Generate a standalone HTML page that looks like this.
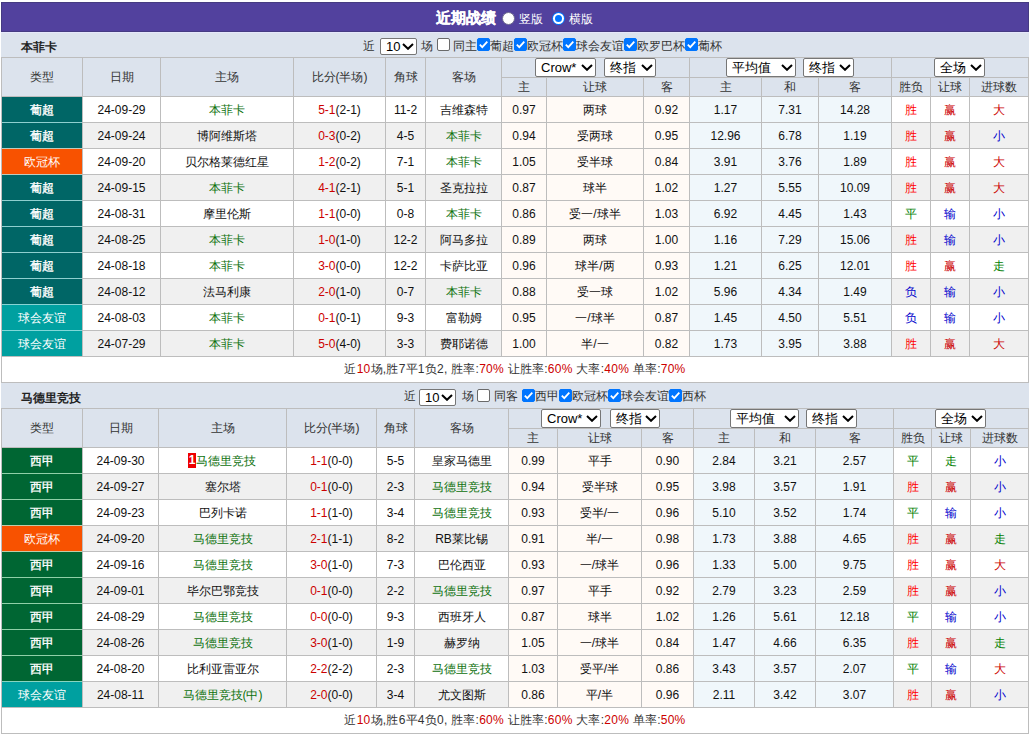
<!DOCTYPE html>
<html><head><meta charset="utf-8"><style>
html,body{margin:0;padding:0;background:#fff;}
body{width:1032px;height:737px;overflow:hidden;position:relative;font-family:"Liberation Sans",sans-serif;font-size:12px;}
div,svg{position:absolute;box-sizing:border-box;}
div{white-space:nowrap;}
.sel{background:#fff;border:1px solid #767676;border-radius:2px;color:#000;}
.sel span{position:absolute;white-space:nowrap;}
.cb{width:13px;height:13px;border:1px solid #6a6a6a;border-radius:2px;background:#fff;}
.cb.on{background:#0075ff;border-color:#0075ff;}
.cb svg{left:-1px;top:-1px;}
.badge{display:inline-block;background:#e00;color:#fff;font-weight:bold;width:8px;height:15px;line-height:15px;text-align:center;vertical-align:middle;font-size:12px;position:relative;top:-1px;margin-left:-1px;}
</style></head><body>
<div style="left:1px;top:2px;width:1028px;height:30px;background:#52419e;box-sizing:border-box;border:1px solid #463b82"></div><div style="left:436px;top:3px;width:70px;height:30px;color:#fff;font-weight:bold;font-size:15px;line-height:30px;-webkit-text-stroke:0.3px #fff">近期战绩</div><div style="left:502px;top:12px;width:13px;height:13px;background:#fff;border-radius:50%;border:1px solid #6e6a8e"></div><div style="left:519px;top:4px;width:30px;height:30px;color:#fff;font-size:12px;line-height:30px">竖版</div><div style="left:552px;top:12px;width:13px;height:13px;background:#0075ff;border-radius:50%"></div><div style="left:555px;top:15px;width:7px;height:7px;background:#0075ff;border-radius:50%;box-shadow:0 0 0 2px #fff"></div><div style="left:569px;top:4px;width:30px;height:30px;color:#fff;font-size:12px;line-height:30px">横版</div><div style="left:1px;top:32px;width:1028px;height:1px;background:#e5e7fb"></div><div style="left:1px;top:33px;width:1028px;height:24px;background:#dce3ed"></div><div style="left:21px;top:35px;width:80px;height:24px;font-weight:bold;color:#222;line-height:24px">本菲卡</div><div style="left:363px;top:34px;width:60px;height:24px;line-height:24px;color:#333;white-space:nowrap">近</div><div class="sel" style="left:380px;top:38px;width:37px;height:17px;"><span style="left:5px;top:0;line-height:15px;font-size:13px">10</span><svg style="left:21px;top:4px" width="12" height="7" viewBox="0 0 12 7"><path d="M1 1 L6 5.8 L11 1" fill="none" stroke="#000" stroke-width="2"/></svg></div><div style="left:421px;top:34px;width:60px;height:24px;line-height:24px;color:#333;white-space:nowrap">场</div><div class="cb" style="left:437px;top:38px"></div><div style="left:453px;top:34px;width:60px;height:24px;line-height:24px;color:#333;white-space:nowrap">同主</div><div class="cb on" style="left:477px;top:38px"><svg width="13" height="13" viewBox="0 0 13 13"><path d="M2.8 6.6 L5.3 9.1 L10.3 3.6" fill="none" stroke="#fff" stroke-width="1.8"/></svg></div><div style="left:490px;top:34px;width:60px;height:24px;line-height:24px;color:#333;white-space:nowrap">葡超</div><div class="cb on" style="left:514px;top:38px"><svg width="13" height="13" viewBox="0 0 13 13"><path d="M2.8 6.6 L5.3 9.1 L10.3 3.6" fill="none" stroke="#fff" stroke-width="1.8"/></svg></div><div style="left:527px;top:34px;width:60px;height:24px;line-height:24px;color:#333;white-space:nowrap">欧冠杯</div><div class="cb on" style="left:563px;top:38px"><svg width="13" height="13" viewBox="0 0 13 13"><path d="M2.8 6.6 L5.3 9.1 L10.3 3.6" fill="none" stroke="#fff" stroke-width="1.8"/></svg></div><div style="left:576px;top:34px;width:60px;height:24px;line-height:24px;color:#333;white-space:nowrap">球会友谊</div><div class="cb on" style="left:624px;top:38px"><svg width="13" height="13" viewBox="0 0 13 13"><path d="M2.8 6.6 L5.3 9.1 L10.3 3.6" fill="none" stroke="#fff" stroke-width="1.8"/></svg></div><div style="left:637px;top:34px;width:60px;height:24px;line-height:24px;color:#333;white-space:nowrap">欧罗巴杯</div><div class="cb on" style="left:685px;top:38px"><svg width="13" height="13" viewBox="0 0 13 13"><path d="M2.8 6.6 L5.3 9.1 L10.3 3.6" fill="none" stroke="#fff" stroke-width="1.8"/></svg></div><div style="left:698px;top:34px;width:60px;height:24px;line-height:24px;color:#333;white-space:nowrap">葡杯</div><div style="left:1px;top:57px;width:1028px;height:326px;background:#bdbdbd"></div><div style="left:2px;top:58px;width:80px;height:38px;background:#dce3ed;line-height:38px;text-align:center;color:#333">类型</div><div style="left:83px;top:58px;width:77px;height:38px;background:#dce3ed;line-height:38px;text-align:center;color:#333">日期</div><div style="left:161px;top:58px;width:132px;height:38px;background:#dce3ed;line-height:38px;text-align:center;color:#333">主场</div><div style="left:294px;top:58px;width:91px;height:38px;background:#dce3ed;line-height:38px;text-align:center;color:#333">比分(半场)</div><div style="left:386px;top:58px;width:39px;height:38px;background:#dce3ed;line-height:38px;text-align:center;color:#333">角球</div><div style="left:426px;top:58px;width:75px;height:38px;background:#dce3ed;line-height:38px;text-align:center;color:#333">客场</div><div style="left:502px;top:58px;width:187px;height:19px;background:#dce3ed"></div><div style="left:690px;top:58px;width:201px;height:19px;background:#dce3ed"></div><div style="left:892px;top:58px;width:136px;height:19px;background:#dce3ed"></div><div style="left:502px;top:78px;width:44px;height:18px;background:#dce3ed;line-height:18px;text-align:center;color:#333">主</div><div style="left:547px;top:78px;width:96px;height:18px;background:#dce3ed;line-height:18px;text-align:center;color:#333">让球</div><div style="left:644px;top:78px;width:45px;height:18px;background:#dce3ed;line-height:18px;text-align:center;color:#333">客</div><div style="left:690px;top:78px;width:71px;height:18px;background:#dce3ed;line-height:18px;text-align:center;color:#333">主</div><div style="left:762px;top:78px;width:56px;height:18px;background:#dce3ed;line-height:18px;text-align:center;color:#333">和</div><div style="left:819px;top:78px;width:72px;height:18px;background:#dce3ed;line-height:18px;text-align:center;color:#333">客</div><div style="left:892px;top:78px;width:38px;height:18px;background:#dce3ed;line-height:18px;text-align:center;color:#333">胜负</div><div style="left:931px;top:78px;width:38px;height:18px;background:#dce3ed;line-height:18px;text-align:center;color:#333">让球</div><div style="left:970px;top:78px;width:58px;height:18px;background:#dce3ed;line-height:18px;text-align:center;color:#333">进球数</div><div style="left:2px;top:97px;width:80px;height:25px;background:#006666;color:#fff;-webkit-text-stroke:0.35px #fff;line-height:25px;padding-top:1px;text-align:center">葡超</div><div style="left:83px;top:97px;width:77px;height:25px;background:#fff;color:#111;line-height:25px;padding-top:1px;text-align:center">24-09-29</div><div style="left:161px;top:97px;width:132px;height:25px;background:#fff;color:#111;line-height:25px;padding-top:1px;text-align:center"><span style="color:#0b700b">本菲卡</span></div><div style="left:294px;top:97px;width:91px;height:25px;background:#fff;color:#111;line-height:25px;padding-top:1px;text-align:center"><span style="color:#cc0000">5-1</span>(2-1)</div><div style="left:386px;top:97px;width:39px;height:25px;background:#fff;color:#111;line-height:25px;padding-top:1px;text-align:center">11-2</div><div style="left:426px;top:97px;width:75px;height:25px;background:#fff;color:#111;line-height:25px;padding-top:1px;text-align:center">吉维森特</div><div style="left:502px;top:97px;width:44px;height:25px;background:#fffaf6;color:#111;line-height:25px;padding-top:1px;text-align:center">0.97</div><div style="left:547px;top:97px;width:96px;height:25px;background:#fffaf6;color:#111;line-height:25px;padding-top:1px;text-align:center">两球</div><div style="left:644px;top:97px;width:45px;height:25px;background:#fffaf6;color:#111;line-height:25px;padding-top:1px;text-align:center">0.92</div><div style="left:690px;top:97px;width:71px;height:25px;background:#f0f7fb;color:#111;line-height:25px;padding-top:1px;text-align:center">1.17</div><div style="left:762px;top:97px;width:56px;height:25px;background:#f0f7fb;color:#111;line-height:25px;padding-top:1px;text-align:center">7.31</div><div style="left:819px;top:97px;width:72px;height:25px;background:#f0f7fb;color:#111;line-height:25px;padding-top:1px;text-align:center">14.28</div><div style="left:892px;top:97px;width:38px;height:25px;background:#fff;color:#ff0000;line-height:25px;padding-top:1px;text-align:center">胜</div><div style="left:931px;top:97px;width:38px;height:25px;background:#fff;color:#cc0000;line-height:25px;padding-top:1px;text-align:center">赢</div><div style="left:970px;top:97px;width:58px;height:25px;background:#fff;color:#cc0000;line-height:25px;padding-top:1px;text-align:center">大</div><div style="left:2px;top:123px;width:80px;height:25px;background:#006666;color:#fff;-webkit-text-stroke:0.35px #fff;line-height:25px;padding-top:1px;text-align:center">葡超</div><div style="left:83px;top:123px;width:77px;height:25px;background:#f0f0f0;color:#111;line-height:25px;padding-top:1px;text-align:center">24-09-24</div><div style="left:161px;top:123px;width:132px;height:25px;background:#f0f0f0;color:#111;line-height:25px;padding-top:1px;text-align:center">博阿维斯塔</div><div style="left:294px;top:123px;width:91px;height:25px;background:#f0f0f0;color:#111;line-height:25px;padding-top:1px;text-align:center"><span style="color:#cc0000">0-3</span>(0-2)</div><div style="left:386px;top:123px;width:39px;height:25px;background:#f0f0f0;color:#111;line-height:25px;padding-top:1px;text-align:center">4-5</div><div style="left:426px;top:123px;width:75px;height:25px;background:#f0f0f0;color:#111;line-height:25px;padding-top:1px;text-align:center"><span style="color:#0b700b">本菲卡</span></div><div style="left:502px;top:123px;width:44px;height:25px;background:#fffaf6;color:#111;line-height:25px;padding-top:1px;text-align:center">0.94</div><div style="left:547px;top:123px;width:96px;height:25px;background:#fffaf6;color:#111;line-height:25px;padding-top:1px;text-align:center">受两球</div><div style="left:644px;top:123px;width:45px;height:25px;background:#fffaf6;color:#111;line-height:25px;padding-top:1px;text-align:center">0.95</div><div style="left:690px;top:123px;width:71px;height:25px;background:#f0f7fb;color:#111;line-height:25px;padding-top:1px;text-align:center">12.96</div><div style="left:762px;top:123px;width:56px;height:25px;background:#f0f7fb;color:#111;line-height:25px;padding-top:1px;text-align:center">6.78</div><div style="left:819px;top:123px;width:72px;height:25px;background:#f0f7fb;color:#111;line-height:25px;padding-top:1px;text-align:center">1.19</div><div style="left:892px;top:123px;width:38px;height:25px;background:#f0f0f0;color:#ff0000;line-height:25px;padding-top:1px;text-align:center">胜</div><div style="left:931px;top:123px;width:38px;height:25px;background:#f0f0f0;color:#cc0000;line-height:25px;padding-top:1px;text-align:center">赢</div><div style="left:970px;top:123px;width:58px;height:25px;background:#f0f0f0;color:#0000cc;line-height:25px;padding-top:1px;text-align:center">小</div><div style="left:2px;top:149px;width:80px;height:25px;background:#f85200;color:#fff;line-height:25px;padding-top:1px;text-align:center">欧冠杯</div><div style="left:83px;top:149px;width:77px;height:25px;background:#fff;color:#111;line-height:25px;padding-top:1px;text-align:center">24-09-20</div><div style="left:161px;top:149px;width:132px;height:25px;background:#fff;color:#111;line-height:25px;padding-top:1px;text-align:center">贝尔格莱德红星</div><div style="left:294px;top:149px;width:91px;height:25px;background:#fff;color:#111;line-height:25px;padding-top:1px;text-align:center"><span style="color:#cc0000">1-2</span>(0-2)</div><div style="left:386px;top:149px;width:39px;height:25px;background:#fff;color:#111;line-height:25px;padding-top:1px;text-align:center">7-1</div><div style="left:426px;top:149px;width:75px;height:25px;background:#fff;color:#111;line-height:25px;padding-top:1px;text-align:center"><span style="color:#0b700b">本菲卡</span></div><div style="left:502px;top:149px;width:44px;height:25px;background:#fffaf6;color:#111;line-height:25px;padding-top:1px;text-align:center">1.05</div><div style="left:547px;top:149px;width:96px;height:25px;background:#fffaf6;color:#111;line-height:25px;padding-top:1px;text-align:center">受半球</div><div style="left:644px;top:149px;width:45px;height:25px;background:#fffaf6;color:#111;line-height:25px;padding-top:1px;text-align:center">0.84</div><div style="left:690px;top:149px;width:71px;height:25px;background:#f0f7fb;color:#111;line-height:25px;padding-top:1px;text-align:center">3.91</div><div style="left:762px;top:149px;width:56px;height:25px;background:#f0f7fb;color:#111;line-height:25px;padding-top:1px;text-align:center">3.76</div><div style="left:819px;top:149px;width:72px;height:25px;background:#f0f7fb;color:#111;line-height:25px;padding-top:1px;text-align:center">1.89</div><div style="left:892px;top:149px;width:38px;height:25px;background:#fff;color:#ff0000;line-height:25px;padding-top:1px;text-align:center">胜</div><div style="left:931px;top:149px;width:38px;height:25px;background:#fff;color:#cc0000;line-height:25px;padding-top:1px;text-align:center">赢</div><div style="left:970px;top:149px;width:58px;height:25px;background:#fff;color:#cc0000;line-height:25px;padding-top:1px;text-align:center">大</div><div style="left:2px;top:175px;width:80px;height:25px;background:#006666;color:#fff;-webkit-text-stroke:0.35px #fff;line-height:25px;padding-top:1px;text-align:center">葡超</div><div style="left:83px;top:175px;width:77px;height:25px;background:#f0f0f0;color:#111;line-height:25px;padding-top:1px;text-align:center">24-09-15</div><div style="left:161px;top:175px;width:132px;height:25px;background:#f0f0f0;color:#111;line-height:25px;padding-top:1px;text-align:center"><span style="color:#0b700b">本菲卡</span></div><div style="left:294px;top:175px;width:91px;height:25px;background:#f0f0f0;color:#111;line-height:25px;padding-top:1px;text-align:center"><span style="color:#cc0000">4-1</span>(2-1)</div><div style="left:386px;top:175px;width:39px;height:25px;background:#f0f0f0;color:#111;line-height:25px;padding-top:1px;text-align:center">5-1</div><div style="left:426px;top:175px;width:75px;height:25px;background:#f0f0f0;color:#111;line-height:25px;padding-top:1px;text-align:center">圣克拉拉</div><div style="left:502px;top:175px;width:44px;height:25px;background:#fffaf6;color:#111;line-height:25px;padding-top:1px;text-align:center">0.87</div><div style="left:547px;top:175px;width:96px;height:25px;background:#fffaf6;color:#111;line-height:25px;padding-top:1px;text-align:center">球半</div><div style="left:644px;top:175px;width:45px;height:25px;background:#fffaf6;color:#111;line-height:25px;padding-top:1px;text-align:center">1.02</div><div style="left:690px;top:175px;width:71px;height:25px;background:#f0f7fb;color:#111;line-height:25px;padding-top:1px;text-align:center">1.27</div><div style="left:762px;top:175px;width:56px;height:25px;background:#f0f7fb;color:#111;line-height:25px;padding-top:1px;text-align:center">5.55</div><div style="left:819px;top:175px;width:72px;height:25px;background:#f0f7fb;color:#111;line-height:25px;padding-top:1px;text-align:center">10.09</div><div style="left:892px;top:175px;width:38px;height:25px;background:#f0f0f0;color:#ff0000;line-height:25px;padding-top:1px;text-align:center">胜</div><div style="left:931px;top:175px;width:38px;height:25px;background:#f0f0f0;color:#cc0000;line-height:25px;padding-top:1px;text-align:center">赢</div><div style="left:970px;top:175px;width:58px;height:25px;background:#f0f0f0;color:#cc0000;line-height:25px;padding-top:1px;text-align:center">大</div><div style="left:2px;top:201px;width:80px;height:25px;background:#006666;color:#fff;-webkit-text-stroke:0.35px #fff;line-height:25px;padding-top:1px;text-align:center">葡超</div><div style="left:83px;top:201px;width:77px;height:25px;background:#fff;color:#111;line-height:25px;padding-top:1px;text-align:center">24-08-31</div><div style="left:161px;top:201px;width:132px;height:25px;background:#fff;color:#111;line-height:25px;padding-top:1px;text-align:center">摩里伦斯</div><div style="left:294px;top:201px;width:91px;height:25px;background:#fff;color:#111;line-height:25px;padding-top:1px;text-align:center"><span style="color:#cc0000">1-1</span>(0-0)</div><div style="left:386px;top:201px;width:39px;height:25px;background:#fff;color:#111;line-height:25px;padding-top:1px;text-align:center">0-8</div><div style="left:426px;top:201px;width:75px;height:25px;background:#fff;color:#111;line-height:25px;padding-top:1px;text-align:center"><span style="color:#0b700b">本菲卡</span></div><div style="left:502px;top:201px;width:44px;height:25px;background:#fffaf6;color:#111;line-height:25px;padding-top:1px;text-align:center">0.86</div><div style="left:547px;top:201px;width:96px;height:25px;background:#fffaf6;color:#111;line-height:25px;padding-top:1px;text-align:center">受一/球半</div><div style="left:644px;top:201px;width:45px;height:25px;background:#fffaf6;color:#111;line-height:25px;padding-top:1px;text-align:center">1.03</div><div style="left:690px;top:201px;width:71px;height:25px;background:#f0f7fb;color:#111;line-height:25px;padding-top:1px;text-align:center">6.92</div><div style="left:762px;top:201px;width:56px;height:25px;background:#f0f7fb;color:#111;line-height:25px;padding-top:1px;text-align:center">4.45</div><div style="left:819px;top:201px;width:72px;height:25px;background:#f0f7fb;color:#111;line-height:25px;padding-top:1px;text-align:center">1.43</div><div style="left:892px;top:201px;width:38px;height:25px;background:#fff;color:#008000;line-height:25px;padding-top:1px;text-align:center">平</div><div style="left:931px;top:201px;width:38px;height:25px;background:#fff;color:#0000cc;line-height:25px;padding-top:1px;text-align:center">输</div><div style="left:970px;top:201px;width:58px;height:25px;background:#fff;color:#0000cc;line-height:25px;padding-top:1px;text-align:center">小</div><div style="left:2px;top:227px;width:80px;height:25px;background:#006666;color:#fff;-webkit-text-stroke:0.35px #fff;line-height:25px;padding-top:1px;text-align:center">葡超</div><div style="left:83px;top:227px;width:77px;height:25px;background:#f0f0f0;color:#111;line-height:25px;padding-top:1px;text-align:center">24-08-25</div><div style="left:161px;top:227px;width:132px;height:25px;background:#f0f0f0;color:#111;line-height:25px;padding-top:1px;text-align:center"><span style="color:#0b700b">本菲卡</span></div><div style="left:294px;top:227px;width:91px;height:25px;background:#f0f0f0;color:#111;line-height:25px;padding-top:1px;text-align:center"><span style="color:#cc0000">1-0</span>(1-0)</div><div style="left:386px;top:227px;width:39px;height:25px;background:#f0f0f0;color:#111;line-height:25px;padding-top:1px;text-align:center">12-2</div><div style="left:426px;top:227px;width:75px;height:25px;background:#f0f0f0;color:#111;line-height:25px;padding-top:1px;text-align:center">阿马多拉</div><div style="left:502px;top:227px;width:44px;height:25px;background:#fffaf6;color:#111;line-height:25px;padding-top:1px;text-align:center">0.89</div><div style="left:547px;top:227px;width:96px;height:25px;background:#fffaf6;color:#111;line-height:25px;padding-top:1px;text-align:center">两球</div><div style="left:644px;top:227px;width:45px;height:25px;background:#fffaf6;color:#111;line-height:25px;padding-top:1px;text-align:center">1.00</div><div style="left:690px;top:227px;width:71px;height:25px;background:#f0f7fb;color:#111;line-height:25px;padding-top:1px;text-align:center">1.16</div><div style="left:762px;top:227px;width:56px;height:25px;background:#f0f7fb;color:#111;line-height:25px;padding-top:1px;text-align:center">7.29</div><div style="left:819px;top:227px;width:72px;height:25px;background:#f0f7fb;color:#111;line-height:25px;padding-top:1px;text-align:center">15.06</div><div style="left:892px;top:227px;width:38px;height:25px;background:#f0f0f0;color:#ff0000;line-height:25px;padding-top:1px;text-align:center">胜</div><div style="left:931px;top:227px;width:38px;height:25px;background:#f0f0f0;color:#0000cc;line-height:25px;padding-top:1px;text-align:center">输</div><div style="left:970px;top:227px;width:58px;height:25px;background:#f0f0f0;color:#0000cc;line-height:25px;padding-top:1px;text-align:center">小</div><div style="left:2px;top:253px;width:80px;height:25px;background:#006666;color:#fff;-webkit-text-stroke:0.35px #fff;line-height:25px;padding-top:1px;text-align:center">葡超</div><div style="left:83px;top:253px;width:77px;height:25px;background:#fff;color:#111;line-height:25px;padding-top:1px;text-align:center">24-08-18</div><div style="left:161px;top:253px;width:132px;height:25px;background:#fff;color:#111;line-height:25px;padding-top:1px;text-align:center"><span style="color:#0b700b">本菲卡</span></div><div style="left:294px;top:253px;width:91px;height:25px;background:#fff;color:#111;line-height:25px;padding-top:1px;text-align:center"><span style="color:#cc0000">3-0</span>(0-0)</div><div style="left:386px;top:253px;width:39px;height:25px;background:#fff;color:#111;line-height:25px;padding-top:1px;text-align:center">12-2</div><div style="left:426px;top:253px;width:75px;height:25px;background:#fff;color:#111;line-height:25px;padding-top:1px;text-align:center">卡萨比亚</div><div style="left:502px;top:253px;width:44px;height:25px;background:#fffaf6;color:#111;line-height:25px;padding-top:1px;text-align:center">0.96</div><div style="left:547px;top:253px;width:96px;height:25px;background:#fffaf6;color:#111;line-height:25px;padding-top:1px;text-align:center">球半/两</div><div style="left:644px;top:253px;width:45px;height:25px;background:#fffaf6;color:#111;line-height:25px;padding-top:1px;text-align:center">0.93</div><div style="left:690px;top:253px;width:71px;height:25px;background:#f0f7fb;color:#111;line-height:25px;padding-top:1px;text-align:center">1.21</div><div style="left:762px;top:253px;width:56px;height:25px;background:#f0f7fb;color:#111;line-height:25px;padding-top:1px;text-align:center">6.25</div><div style="left:819px;top:253px;width:72px;height:25px;background:#f0f7fb;color:#111;line-height:25px;padding-top:1px;text-align:center">12.01</div><div style="left:892px;top:253px;width:38px;height:25px;background:#fff;color:#ff0000;line-height:25px;padding-top:1px;text-align:center">胜</div><div style="left:931px;top:253px;width:38px;height:25px;background:#fff;color:#cc0000;line-height:25px;padding-top:1px;text-align:center">赢</div><div style="left:970px;top:253px;width:58px;height:25px;background:#fff;color:#008000;line-height:25px;padding-top:1px;text-align:center">走</div><div style="left:2px;top:279px;width:80px;height:25px;background:#006666;color:#fff;-webkit-text-stroke:0.35px #fff;line-height:25px;padding-top:1px;text-align:center">葡超</div><div style="left:83px;top:279px;width:77px;height:25px;background:#f0f0f0;color:#111;line-height:25px;padding-top:1px;text-align:center">24-08-12</div><div style="left:161px;top:279px;width:132px;height:25px;background:#f0f0f0;color:#111;line-height:25px;padding-top:1px;text-align:center">法马利康</div><div style="left:294px;top:279px;width:91px;height:25px;background:#f0f0f0;color:#111;line-height:25px;padding-top:1px;text-align:center"><span style="color:#cc0000">2-0</span>(1-0)</div><div style="left:386px;top:279px;width:39px;height:25px;background:#f0f0f0;color:#111;line-height:25px;padding-top:1px;text-align:center">0-7</div><div style="left:426px;top:279px;width:75px;height:25px;background:#f0f0f0;color:#111;line-height:25px;padding-top:1px;text-align:center"><span style="color:#0b700b">本菲卡</span></div><div style="left:502px;top:279px;width:44px;height:25px;background:#fffaf6;color:#111;line-height:25px;padding-top:1px;text-align:center">0.88</div><div style="left:547px;top:279px;width:96px;height:25px;background:#fffaf6;color:#111;line-height:25px;padding-top:1px;text-align:center">受一球</div><div style="left:644px;top:279px;width:45px;height:25px;background:#fffaf6;color:#111;line-height:25px;padding-top:1px;text-align:center">1.02</div><div style="left:690px;top:279px;width:71px;height:25px;background:#f0f7fb;color:#111;line-height:25px;padding-top:1px;text-align:center">5.96</div><div style="left:762px;top:279px;width:56px;height:25px;background:#f0f7fb;color:#111;line-height:25px;padding-top:1px;text-align:center">4.34</div><div style="left:819px;top:279px;width:72px;height:25px;background:#f0f7fb;color:#111;line-height:25px;padding-top:1px;text-align:center">1.49</div><div style="left:892px;top:279px;width:38px;height:25px;background:#f0f0f0;color:#0000cc;line-height:25px;padding-top:1px;text-align:center">负</div><div style="left:931px;top:279px;width:38px;height:25px;background:#f0f0f0;color:#0000cc;line-height:25px;padding-top:1px;text-align:center">输</div><div style="left:970px;top:279px;width:58px;height:25px;background:#f0f0f0;color:#0000cc;line-height:25px;padding-top:1px;text-align:center">小</div><div style="left:2px;top:305px;width:80px;height:25px;background:#00a0a0;color:#fff;line-height:25px;padding-top:1px;text-align:center">球会友谊</div><div style="left:83px;top:305px;width:77px;height:25px;background:#fff;color:#111;line-height:25px;padding-top:1px;text-align:center">24-08-03</div><div style="left:161px;top:305px;width:132px;height:25px;background:#fff;color:#111;line-height:25px;padding-top:1px;text-align:center"><span style="color:#0b700b">本菲卡</span></div><div style="left:294px;top:305px;width:91px;height:25px;background:#fff;color:#111;line-height:25px;padding-top:1px;text-align:center"><span style="color:#cc0000">0-1</span>(0-1)</div><div style="left:386px;top:305px;width:39px;height:25px;background:#fff;color:#111;line-height:25px;padding-top:1px;text-align:center">9-3</div><div style="left:426px;top:305px;width:75px;height:25px;background:#fff;color:#111;line-height:25px;padding-top:1px;text-align:center">富勒姆</div><div style="left:502px;top:305px;width:44px;height:25px;background:#fffaf6;color:#111;line-height:25px;padding-top:1px;text-align:center">0.95</div><div style="left:547px;top:305px;width:96px;height:25px;background:#fffaf6;color:#111;line-height:25px;padding-top:1px;text-align:center">一/球半</div><div style="left:644px;top:305px;width:45px;height:25px;background:#fffaf6;color:#111;line-height:25px;padding-top:1px;text-align:center">0.87</div><div style="left:690px;top:305px;width:71px;height:25px;background:#f0f7fb;color:#111;line-height:25px;padding-top:1px;text-align:center">1.45</div><div style="left:762px;top:305px;width:56px;height:25px;background:#f0f7fb;color:#111;line-height:25px;padding-top:1px;text-align:center">4.50</div><div style="left:819px;top:305px;width:72px;height:25px;background:#f0f7fb;color:#111;line-height:25px;padding-top:1px;text-align:center">5.51</div><div style="left:892px;top:305px;width:38px;height:25px;background:#fff;color:#0000cc;line-height:25px;padding-top:1px;text-align:center">负</div><div style="left:931px;top:305px;width:38px;height:25px;background:#fff;color:#0000cc;line-height:25px;padding-top:1px;text-align:center">输</div><div style="left:970px;top:305px;width:58px;height:25px;background:#fff;color:#0000cc;line-height:25px;padding-top:1px;text-align:center">小</div><div style="left:2px;top:331px;width:80px;height:25px;background:#00a0a0;color:#fff;line-height:25px;padding-top:1px;text-align:center">球会友谊</div><div style="left:83px;top:331px;width:77px;height:25px;background:#f0f0f0;color:#111;line-height:25px;padding-top:1px;text-align:center">24-07-29</div><div style="left:161px;top:331px;width:132px;height:25px;background:#f0f0f0;color:#111;line-height:25px;padding-top:1px;text-align:center"><span style="color:#0b700b">本菲卡</span></div><div style="left:294px;top:331px;width:91px;height:25px;background:#f0f0f0;color:#111;line-height:25px;padding-top:1px;text-align:center"><span style="color:#cc0000">5-0</span>(4-0)</div><div style="left:386px;top:331px;width:39px;height:25px;background:#f0f0f0;color:#111;line-height:25px;padding-top:1px;text-align:center">3-3</div><div style="left:426px;top:331px;width:75px;height:25px;background:#f0f0f0;color:#111;line-height:25px;padding-top:1px;text-align:center">费耶诺德</div><div style="left:502px;top:331px;width:44px;height:25px;background:#fffaf6;color:#111;line-height:25px;padding-top:1px;text-align:center">1.00</div><div style="left:547px;top:331px;width:96px;height:25px;background:#fffaf6;color:#111;line-height:25px;padding-top:1px;text-align:center">半/一</div><div style="left:644px;top:331px;width:45px;height:25px;background:#fffaf6;color:#111;line-height:25px;padding-top:1px;text-align:center">0.82</div><div style="left:690px;top:331px;width:71px;height:25px;background:#f0f7fb;color:#111;line-height:25px;padding-top:1px;text-align:center">1.73</div><div style="left:762px;top:331px;width:56px;height:25px;background:#f0f7fb;color:#111;line-height:25px;padding-top:1px;text-align:center">3.95</div><div style="left:819px;top:331px;width:72px;height:25px;background:#f0f7fb;color:#111;line-height:25px;padding-top:1px;text-align:center">3.88</div><div style="left:892px;top:331px;width:38px;height:25px;background:#f0f0f0;color:#ff0000;line-height:25px;padding-top:1px;text-align:center">胜</div><div style="left:931px;top:331px;width:38px;height:25px;background:#f0f0f0;color:#cc0000;line-height:25px;padding-top:1px;text-align:center">赢</div><div style="left:970px;top:331px;width:58px;height:25px;background:#f0f0f0;color:#cc0000;line-height:25px;padding-top:1px;text-align:center">大</div><div style="left:2px;top:122px;width:80px;height:1px;background:#8fcfcf"></div><div style="left:2px;top:148px;width:80px;height:1px;background:#bfcbbc"></div><div style="left:2px;top:174px;width:80px;height:1px;background:#bfcbbc"></div><div style="left:2px;top:200px;width:80px;height:1px;background:#8fcfcf"></div><div style="left:2px;top:226px;width:80px;height:1px;background:#8fcfcf"></div><div style="left:2px;top:252px;width:80px;height:1px;background:#8fcfcf"></div><div style="left:2px;top:278px;width:80px;height:1px;background:#8fcfcf"></div><div style="left:2px;top:304px;width:80px;height:1px;background:#87d3d3"></div><div style="left:2px;top:330px;width:80px;height:1px;background:#80d8d8"></div><div style="left:2px;top:357px;width:1026px;height:25px;background:#fff;line-height:25px;text-align:center;color:#333;letter-spacing:0.25px">近<span style="color:#cc0000">10</span>场,胜7平1负2, 胜率:<span style="color:#cc0000">70%</span> 让胜率:<span style="color:#cc0000">60%</span> 大率:<span style="color:#cc0000">40%</span> 单率:<span style="color:#cc0000">70%</span></div><div class="sel" style="left:535px;top:58px;width:61px;height:19px;"><span style="left:5px;top:0;line-height:17px;font-size:13px">Crow*</span><svg style="left:45px;top:5px" width="12" height="7" viewBox="0 0 12 7"><path d="M1 1 L6 5.8 L11 1" fill="none" stroke="#000" stroke-width="2"/></svg></div><div class="sel" style="left:604px;top:58px;width:52px;height:19px;"><span style="left:5px;top:0;line-height:17px;font-size:13px">终指</span><svg style="left:36px;top:5px" width="12" height="7" viewBox="0 0 12 7"><path d="M1 1 L6 5.8 L11 1" fill="none" stroke="#000" stroke-width="2"/></svg></div><div class="sel" style="left:726px;top:58px;width:70px;height:19px;"><span style="left:5px;top:0;line-height:17px;font-size:13px">平均值</span><svg style="left:54px;top:5px" width="12" height="7" viewBox="0 0 12 7"><path d="M1 1 L6 5.8 L11 1" fill="none" stroke="#000" stroke-width="2"/></svg></div><div class="sel" style="left:803px;top:58px;width:51px;height:19px;"><span style="left:5px;top:0;line-height:17px;font-size:13px">终指</span><svg style="left:35px;top:5px" width="12" height="7" viewBox="0 0 12 7"><path d="M1 1 L6 5.8 L11 1" fill="none" stroke="#000" stroke-width="2"/></svg></div><div class="sel" style="left:934px;top:58px;width:51px;height:19px;"><span style="left:5px;top:0;line-height:17px;font-size:13px">全场</span><svg style="left:35px;top:5px" width="12" height="7" viewBox="0 0 12 7"><path d="M1 1 L6 5.8 L11 1" fill="none" stroke="#000" stroke-width="2"/></svg></div><div style="left:1px;top:383px;width:1028px;height:25px;background:#dce3ed"></div><div style="left:21px;top:386px;width:80px;height:25px;font-weight:bold;color:#222;line-height:25px">马德里竞技</div><div style="left:404px;top:384px;width:60px;height:25px;line-height:25px;color:#333;white-space:nowrap">近</div><div class="sel" style="left:419px;top:389px;width:37px;height:17px;"><span style="left:5px;top:0;line-height:15px;font-size:13px">10</span><svg style="left:21px;top:4px" width="12" height="7" viewBox="0 0 12 7"><path d="M1 1 L6 5.8 L11 1" fill="none" stroke="#000" stroke-width="2"/></svg></div><div style="left:462px;top:384px;width:60px;height:25px;line-height:25px;color:#333;white-space:nowrap">场</div><div class="cb" style="left:477px;top:389px"></div><div style="left:494px;top:384px;width:60px;height:25px;line-height:25px;color:#333;white-space:nowrap">同客</div><div class="cb on" style="left:522px;top:389px"><svg width="13" height="13" viewBox="0 0 13 13"><path d="M2.8 6.6 L5.3 9.1 L10.3 3.6" fill="none" stroke="#fff" stroke-width="1.8"/></svg></div><div style="left:535px;top:384px;width:60px;height:25px;line-height:25px;color:#333;white-space:nowrap">西甲</div><div class="cb on" style="left:559px;top:389px"><svg width="13" height="13" viewBox="0 0 13 13"><path d="M2.8 6.6 L5.3 9.1 L10.3 3.6" fill="none" stroke="#fff" stroke-width="1.8"/></svg></div><div style="left:572px;top:384px;width:60px;height:25px;line-height:25px;color:#333;white-space:nowrap">欧冠杯</div><div class="cb on" style="left:608px;top:389px"><svg width="13" height="13" viewBox="0 0 13 13"><path d="M2.8 6.6 L5.3 9.1 L10.3 3.6" fill="none" stroke="#fff" stroke-width="1.8"/></svg></div><div style="left:621px;top:384px;width:60px;height:25px;line-height:25px;color:#333;white-space:nowrap">球会友谊</div><div class="cb on" style="left:669px;top:389px"><svg width="13" height="13" viewBox="0 0 13 13"><path d="M2.8 6.6 L5.3 9.1 L10.3 3.6" fill="none" stroke="#fff" stroke-width="1.8"/></svg></div><div style="left:682px;top:384px;width:60px;height:25px;line-height:25px;color:#333;white-space:nowrap">西杯</div><div style="left:1px;top:408px;width:1028px;height:326px;background:#bdbdbd"></div><div style="left:2px;top:409px;width:80px;height:38px;background:#dce3ed;line-height:38px;text-align:center;color:#333">类型</div><div style="left:83px;top:409px;width:75px;height:38px;background:#dce3ed;line-height:38px;text-align:center;color:#333">日期</div><div style="left:159px;top:409px;width:127px;height:38px;background:#dce3ed;line-height:38px;text-align:center;color:#333">主场</div><div style="left:287px;top:409px;width:89px;height:38px;background:#dce3ed;line-height:38px;text-align:center;color:#333">比分(半场)</div><div style="left:377px;top:409px;width:37px;height:38px;background:#dce3ed;line-height:38px;text-align:center;color:#333">角球</div><div style="left:415px;top:409px;width:93px;height:38px;background:#dce3ed;line-height:38px;text-align:center;color:#333">客场</div><div style="left:509px;top:409px;width:184px;height:19px;background:#dce3ed"></div><div style="left:694px;top:409px;width:199px;height:19px;background:#dce3ed"></div><div style="left:894px;top:409px;width:134px;height:19px;background:#dce3ed"></div><div style="left:509px;top:429px;width:48px;height:18px;background:#dce3ed;line-height:18px;text-align:center;color:#333">主</div><div style="left:558px;top:429px;width:83px;height:18px;background:#dce3ed;line-height:18px;text-align:center;color:#333">让球</div><div style="left:642px;top:429px;width:51px;height:18px;background:#dce3ed;line-height:18px;text-align:center;color:#333">客</div><div style="left:694px;top:429px;width:60px;height:18px;background:#dce3ed;line-height:18px;text-align:center;color:#333">主</div><div style="left:755px;top:429px;width:60px;height:18px;background:#dce3ed;line-height:18px;text-align:center;color:#333">和</div><div style="left:816px;top:429px;width:77px;height:18px;background:#dce3ed;line-height:18px;text-align:center;color:#333">客</div><div style="left:894px;top:429px;width:37px;height:18px;background:#dce3ed;line-height:18px;text-align:center;color:#333">胜负</div><div style="left:932px;top:429px;width:38px;height:18px;background:#dce3ed;line-height:18px;text-align:center;color:#333">让球</div><div style="left:971px;top:429px;width:57px;height:18px;background:#dce3ed;line-height:18px;text-align:center;color:#333">进球数</div><div style="left:2px;top:448px;width:80px;height:25px;background:#006633;color:#fff;-webkit-text-stroke:0.35px #fff;line-height:25px;padding-top:1px;text-align:center">西甲</div><div style="left:83px;top:448px;width:75px;height:25px;background:#fff;color:#111;line-height:25px;padding-top:1px;text-align:center">24-09-30</div><div style="left:159px;top:448px;width:127px;height:25px;background:#fff;color:#111;line-height:25px;padding-top:1px;text-align:center"><span class="badge">1</span><span style="color:#0b700b">马德里竞技</span></div><div style="left:287px;top:448px;width:89px;height:25px;background:#fff;color:#111;line-height:25px;padding-top:1px;text-align:center"><span style="color:#cc0000">1-1</span>(0-0)</div><div style="left:377px;top:448px;width:37px;height:25px;background:#fff;color:#111;line-height:25px;padding-top:1px;text-align:center">5-5</div><div style="left:415px;top:448px;width:93px;height:25px;background:#fff;color:#111;line-height:25px;padding-top:1px;text-align:center">皇家马德里</div><div style="left:509px;top:448px;width:48px;height:25px;background:#fffaf6;color:#111;line-height:25px;padding-top:1px;text-align:center">0.99</div><div style="left:558px;top:448px;width:83px;height:25px;background:#fffaf6;color:#111;line-height:25px;padding-top:1px;text-align:center">平手</div><div style="left:642px;top:448px;width:51px;height:25px;background:#fffaf6;color:#111;line-height:25px;padding-top:1px;text-align:center">0.90</div><div style="left:694px;top:448px;width:60px;height:25px;background:#f0f7fb;color:#111;line-height:25px;padding-top:1px;text-align:center">2.84</div><div style="left:755px;top:448px;width:60px;height:25px;background:#f0f7fb;color:#111;line-height:25px;padding-top:1px;text-align:center">3.21</div><div style="left:816px;top:448px;width:77px;height:25px;background:#f0f7fb;color:#111;line-height:25px;padding-top:1px;text-align:center">2.57</div><div style="left:894px;top:448px;width:37px;height:25px;background:#fff;color:#008000;line-height:25px;padding-top:1px;text-align:center">平</div><div style="left:932px;top:448px;width:38px;height:25px;background:#fff;color:#008000;line-height:25px;padding-top:1px;text-align:center">走</div><div style="left:971px;top:448px;width:57px;height:25px;background:#fff;color:#0000cc;line-height:25px;padding-top:1px;text-align:center">小</div><div style="left:2px;top:474px;width:80px;height:25px;background:#006633;color:#fff;-webkit-text-stroke:0.35px #fff;line-height:25px;padding-top:1px;text-align:center">西甲</div><div style="left:83px;top:474px;width:75px;height:25px;background:#f0f0f0;color:#111;line-height:25px;padding-top:1px;text-align:center">24-09-27</div><div style="left:159px;top:474px;width:127px;height:25px;background:#f0f0f0;color:#111;line-height:25px;padding-top:1px;text-align:center">塞尔塔</div><div style="left:287px;top:474px;width:89px;height:25px;background:#f0f0f0;color:#111;line-height:25px;padding-top:1px;text-align:center"><span style="color:#cc0000">0-1</span>(0-0)</div><div style="left:377px;top:474px;width:37px;height:25px;background:#f0f0f0;color:#111;line-height:25px;padding-top:1px;text-align:center">2-3</div><div style="left:415px;top:474px;width:93px;height:25px;background:#f0f0f0;color:#111;line-height:25px;padding-top:1px;text-align:center"><span style="color:#0b700b">马德里竞技</span></div><div style="left:509px;top:474px;width:48px;height:25px;background:#fffaf6;color:#111;line-height:25px;padding-top:1px;text-align:center">0.94</div><div style="left:558px;top:474px;width:83px;height:25px;background:#fffaf6;color:#111;line-height:25px;padding-top:1px;text-align:center">受半球</div><div style="left:642px;top:474px;width:51px;height:25px;background:#fffaf6;color:#111;line-height:25px;padding-top:1px;text-align:center">0.95</div><div style="left:694px;top:474px;width:60px;height:25px;background:#f0f7fb;color:#111;line-height:25px;padding-top:1px;text-align:center">3.98</div><div style="left:755px;top:474px;width:60px;height:25px;background:#f0f7fb;color:#111;line-height:25px;padding-top:1px;text-align:center">3.57</div><div style="left:816px;top:474px;width:77px;height:25px;background:#f0f7fb;color:#111;line-height:25px;padding-top:1px;text-align:center">1.91</div><div style="left:894px;top:474px;width:37px;height:25px;background:#f0f0f0;color:#ff0000;line-height:25px;padding-top:1px;text-align:center">胜</div><div style="left:932px;top:474px;width:38px;height:25px;background:#f0f0f0;color:#cc0000;line-height:25px;padding-top:1px;text-align:center">赢</div><div style="left:971px;top:474px;width:57px;height:25px;background:#f0f0f0;color:#0000cc;line-height:25px;padding-top:1px;text-align:center">小</div><div style="left:2px;top:500px;width:80px;height:25px;background:#006633;color:#fff;-webkit-text-stroke:0.35px #fff;line-height:25px;padding-top:1px;text-align:center">西甲</div><div style="left:83px;top:500px;width:75px;height:25px;background:#fff;color:#111;line-height:25px;padding-top:1px;text-align:center">24-09-23</div><div style="left:159px;top:500px;width:127px;height:25px;background:#fff;color:#111;line-height:25px;padding-top:1px;text-align:center">巴列卡诺</div><div style="left:287px;top:500px;width:89px;height:25px;background:#fff;color:#111;line-height:25px;padding-top:1px;text-align:center"><span style="color:#cc0000">1-1</span>(1-0)</div><div style="left:377px;top:500px;width:37px;height:25px;background:#fff;color:#111;line-height:25px;padding-top:1px;text-align:center">3-4</div><div style="left:415px;top:500px;width:93px;height:25px;background:#fff;color:#111;line-height:25px;padding-top:1px;text-align:center"><span style="color:#0b700b">马德里竞技</span></div><div style="left:509px;top:500px;width:48px;height:25px;background:#fffaf6;color:#111;line-height:25px;padding-top:1px;text-align:center">0.93</div><div style="left:558px;top:500px;width:83px;height:25px;background:#fffaf6;color:#111;line-height:25px;padding-top:1px;text-align:center">受半/一</div><div style="left:642px;top:500px;width:51px;height:25px;background:#fffaf6;color:#111;line-height:25px;padding-top:1px;text-align:center">0.96</div><div style="left:694px;top:500px;width:60px;height:25px;background:#f0f7fb;color:#111;line-height:25px;padding-top:1px;text-align:center">5.10</div><div style="left:755px;top:500px;width:60px;height:25px;background:#f0f7fb;color:#111;line-height:25px;padding-top:1px;text-align:center">3.52</div><div style="left:816px;top:500px;width:77px;height:25px;background:#f0f7fb;color:#111;line-height:25px;padding-top:1px;text-align:center">1.74</div><div style="left:894px;top:500px;width:37px;height:25px;background:#fff;color:#008000;line-height:25px;padding-top:1px;text-align:center">平</div><div style="left:932px;top:500px;width:38px;height:25px;background:#fff;color:#0000cc;line-height:25px;padding-top:1px;text-align:center">输</div><div style="left:971px;top:500px;width:57px;height:25px;background:#fff;color:#0000cc;line-height:25px;padding-top:1px;text-align:center">小</div><div style="left:2px;top:526px;width:80px;height:25px;background:#f85200;color:#fff;line-height:25px;padding-top:1px;text-align:center">欧冠杯</div><div style="left:83px;top:526px;width:75px;height:25px;background:#f0f0f0;color:#111;line-height:25px;padding-top:1px;text-align:center">24-09-20</div><div style="left:159px;top:526px;width:127px;height:25px;background:#f0f0f0;color:#111;line-height:25px;padding-top:1px;text-align:center"><span style="color:#0b700b">马德里竞技</span></div><div style="left:287px;top:526px;width:89px;height:25px;background:#f0f0f0;color:#111;line-height:25px;padding-top:1px;text-align:center"><span style="color:#cc0000">2-1</span>(1-1)</div><div style="left:377px;top:526px;width:37px;height:25px;background:#f0f0f0;color:#111;line-height:25px;padding-top:1px;text-align:center">8-2</div><div style="left:415px;top:526px;width:93px;height:25px;background:#f0f0f0;color:#111;line-height:25px;padding-top:1px;text-align:center">RB莱比锡</div><div style="left:509px;top:526px;width:48px;height:25px;background:#fffaf6;color:#111;line-height:25px;padding-top:1px;text-align:center">0.91</div><div style="left:558px;top:526px;width:83px;height:25px;background:#fffaf6;color:#111;line-height:25px;padding-top:1px;text-align:center">半/一</div><div style="left:642px;top:526px;width:51px;height:25px;background:#fffaf6;color:#111;line-height:25px;padding-top:1px;text-align:center">0.98</div><div style="left:694px;top:526px;width:60px;height:25px;background:#f0f7fb;color:#111;line-height:25px;padding-top:1px;text-align:center">1.73</div><div style="left:755px;top:526px;width:60px;height:25px;background:#f0f7fb;color:#111;line-height:25px;padding-top:1px;text-align:center">3.88</div><div style="left:816px;top:526px;width:77px;height:25px;background:#f0f7fb;color:#111;line-height:25px;padding-top:1px;text-align:center">4.65</div><div style="left:894px;top:526px;width:37px;height:25px;background:#f0f0f0;color:#ff0000;line-height:25px;padding-top:1px;text-align:center">胜</div><div style="left:932px;top:526px;width:38px;height:25px;background:#f0f0f0;color:#cc0000;line-height:25px;padding-top:1px;text-align:center">赢</div><div style="left:971px;top:526px;width:57px;height:25px;background:#f0f0f0;color:#008000;line-height:25px;padding-top:1px;text-align:center">走</div><div style="left:2px;top:552px;width:80px;height:25px;background:#006633;color:#fff;-webkit-text-stroke:0.35px #fff;line-height:25px;padding-top:1px;text-align:center">西甲</div><div style="left:83px;top:552px;width:75px;height:25px;background:#fff;color:#111;line-height:25px;padding-top:1px;text-align:center">24-09-16</div><div style="left:159px;top:552px;width:127px;height:25px;background:#fff;color:#111;line-height:25px;padding-top:1px;text-align:center"><span style="color:#0b700b">马德里竞技</span></div><div style="left:287px;top:552px;width:89px;height:25px;background:#fff;color:#111;line-height:25px;padding-top:1px;text-align:center"><span style="color:#cc0000">3-0</span>(1-0)</div><div style="left:377px;top:552px;width:37px;height:25px;background:#fff;color:#111;line-height:25px;padding-top:1px;text-align:center">7-3</div><div style="left:415px;top:552px;width:93px;height:25px;background:#fff;color:#111;line-height:25px;padding-top:1px;text-align:center">巴伦西亚</div><div style="left:509px;top:552px;width:48px;height:25px;background:#fffaf6;color:#111;line-height:25px;padding-top:1px;text-align:center">0.93</div><div style="left:558px;top:552px;width:83px;height:25px;background:#fffaf6;color:#111;line-height:25px;padding-top:1px;text-align:center">一/球半</div><div style="left:642px;top:552px;width:51px;height:25px;background:#fffaf6;color:#111;line-height:25px;padding-top:1px;text-align:center">0.96</div><div style="left:694px;top:552px;width:60px;height:25px;background:#f0f7fb;color:#111;line-height:25px;padding-top:1px;text-align:center">1.33</div><div style="left:755px;top:552px;width:60px;height:25px;background:#f0f7fb;color:#111;line-height:25px;padding-top:1px;text-align:center">5.00</div><div style="left:816px;top:552px;width:77px;height:25px;background:#f0f7fb;color:#111;line-height:25px;padding-top:1px;text-align:center">9.75</div><div style="left:894px;top:552px;width:37px;height:25px;background:#fff;color:#ff0000;line-height:25px;padding-top:1px;text-align:center">胜</div><div style="left:932px;top:552px;width:38px;height:25px;background:#fff;color:#cc0000;line-height:25px;padding-top:1px;text-align:center">赢</div><div style="left:971px;top:552px;width:57px;height:25px;background:#fff;color:#cc0000;line-height:25px;padding-top:1px;text-align:center">大</div><div style="left:2px;top:578px;width:80px;height:25px;background:#006633;color:#fff;-webkit-text-stroke:0.35px #fff;line-height:25px;padding-top:1px;text-align:center">西甲</div><div style="left:83px;top:578px;width:75px;height:25px;background:#f0f0f0;color:#111;line-height:25px;padding-top:1px;text-align:center">24-09-01</div><div style="left:159px;top:578px;width:127px;height:25px;background:#f0f0f0;color:#111;line-height:25px;padding-top:1px;text-align:center">毕尔巴鄂竞技</div><div style="left:287px;top:578px;width:89px;height:25px;background:#f0f0f0;color:#111;line-height:25px;padding-top:1px;text-align:center"><span style="color:#cc0000">0-1</span>(0-0)</div><div style="left:377px;top:578px;width:37px;height:25px;background:#f0f0f0;color:#111;line-height:25px;padding-top:1px;text-align:center">2-2</div><div style="left:415px;top:578px;width:93px;height:25px;background:#f0f0f0;color:#111;line-height:25px;padding-top:1px;text-align:center"><span style="color:#0b700b">马德里竞技</span></div><div style="left:509px;top:578px;width:48px;height:25px;background:#fffaf6;color:#111;line-height:25px;padding-top:1px;text-align:center">0.97</div><div style="left:558px;top:578px;width:83px;height:25px;background:#fffaf6;color:#111;line-height:25px;padding-top:1px;text-align:center">平手</div><div style="left:642px;top:578px;width:51px;height:25px;background:#fffaf6;color:#111;line-height:25px;padding-top:1px;text-align:center">0.92</div><div style="left:694px;top:578px;width:60px;height:25px;background:#f0f7fb;color:#111;line-height:25px;padding-top:1px;text-align:center">2.79</div><div style="left:755px;top:578px;width:60px;height:25px;background:#f0f7fb;color:#111;line-height:25px;padding-top:1px;text-align:center">3.23</div><div style="left:816px;top:578px;width:77px;height:25px;background:#f0f7fb;color:#111;line-height:25px;padding-top:1px;text-align:center">2.59</div><div style="left:894px;top:578px;width:37px;height:25px;background:#f0f0f0;color:#ff0000;line-height:25px;padding-top:1px;text-align:center">胜</div><div style="left:932px;top:578px;width:38px;height:25px;background:#f0f0f0;color:#cc0000;line-height:25px;padding-top:1px;text-align:center">赢</div><div style="left:971px;top:578px;width:57px;height:25px;background:#f0f0f0;color:#0000cc;line-height:25px;padding-top:1px;text-align:center">小</div><div style="left:2px;top:604px;width:80px;height:25px;background:#006633;color:#fff;-webkit-text-stroke:0.35px #fff;line-height:25px;padding-top:1px;text-align:center">西甲</div><div style="left:83px;top:604px;width:75px;height:25px;background:#fff;color:#111;line-height:25px;padding-top:1px;text-align:center">24-08-29</div><div style="left:159px;top:604px;width:127px;height:25px;background:#fff;color:#111;line-height:25px;padding-top:1px;text-align:center"><span style="color:#0b700b">马德里竞技</span></div><div style="left:287px;top:604px;width:89px;height:25px;background:#fff;color:#111;line-height:25px;padding-top:1px;text-align:center"><span style="color:#cc0000">0-0</span>(0-0)</div><div style="left:377px;top:604px;width:37px;height:25px;background:#fff;color:#111;line-height:25px;padding-top:1px;text-align:center">9-3</div><div style="left:415px;top:604px;width:93px;height:25px;background:#fff;color:#111;line-height:25px;padding-top:1px;text-align:center">西班牙人</div><div style="left:509px;top:604px;width:48px;height:25px;background:#fffaf6;color:#111;line-height:25px;padding-top:1px;text-align:center">0.87</div><div style="left:558px;top:604px;width:83px;height:25px;background:#fffaf6;color:#111;line-height:25px;padding-top:1px;text-align:center">球半</div><div style="left:642px;top:604px;width:51px;height:25px;background:#fffaf6;color:#111;line-height:25px;padding-top:1px;text-align:center">1.02</div><div style="left:694px;top:604px;width:60px;height:25px;background:#f0f7fb;color:#111;line-height:25px;padding-top:1px;text-align:center">1.26</div><div style="left:755px;top:604px;width:60px;height:25px;background:#f0f7fb;color:#111;line-height:25px;padding-top:1px;text-align:center">5.61</div><div style="left:816px;top:604px;width:77px;height:25px;background:#f0f7fb;color:#111;line-height:25px;padding-top:1px;text-align:center">12.18</div><div style="left:894px;top:604px;width:37px;height:25px;background:#fff;color:#008000;line-height:25px;padding-top:1px;text-align:center">平</div><div style="left:932px;top:604px;width:38px;height:25px;background:#fff;color:#0000cc;line-height:25px;padding-top:1px;text-align:center">输</div><div style="left:971px;top:604px;width:57px;height:25px;background:#fff;color:#0000cc;line-height:25px;padding-top:1px;text-align:center">小</div><div style="left:2px;top:630px;width:80px;height:25px;background:#006633;color:#fff;-webkit-text-stroke:0.35px #fff;line-height:25px;padding-top:1px;text-align:center">西甲</div><div style="left:83px;top:630px;width:75px;height:25px;background:#f0f0f0;color:#111;line-height:25px;padding-top:1px;text-align:center">24-08-26</div><div style="left:159px;top:630px;width:127px;height:25px;background:#f0f0f0;color:#111;line-height:25px;padding-top:1px;text-align:center"><span style="color:#0b700b">马德里竞技</span></div><div style="left:287px;top:630px;width:89px;height:25px;background:#f0f0f0;color:#111;line-height:25px;padding-top:1px;text-align:center"><span style="color:#cc0000">3-0</span>(1-0)</div><div style="left:377px;top:630px;width:37px;height:25px;background:#f0f0f0;color:#111;line-height:25px;padding-top:1px;text-align:center">1-9</div><div style="left:415px;top:630px;width:93px;height:25px;background:#f0f0f0;color:#111;line-height:25px;padding-top:1px;text-align:center">赫罗纳</div><div style="left:509px;top:630px;width:48px;height:25px;background:#fffaf6;color:#111;line-height:25px;padding-top:1px;text-align:center">1.05</div><div style="left:558px;top:630px;width:83px;height:25px;background:#fffaf6;color:#111;line-height:25px;padding-top:1px;text-align:center">一/球半</div><div style="left:642px;top:630px;width:51px;height:25px;background:#fffaf6;color:#111;line-height:25px;padding-top:1px;text-align:center">0.84</div><div style="left:694px;top:630px;width:60px;height:25px;background:#f0f7fb;color:#111;line-height:25px;padding-top:1px;text-align:center">1.47</div><div style="left:755px;top:630px;width:60px;height:25px;background:#f0f7fb;color:#111;line-height:25px;padding-top:1px;text-align:center">4.66</div><div style="left:816px;top:630px;width:77px;height:25px;background:#f0f7fb;color:#111;line-height:25px;padding-top:1px;text-align:center">6.35</div><div style="left:894px;top:630px;width:37px;height:25px;background:#f0f0f0;color:#ff0000;line-height:25px;padding-top:1px;text-align:center">胜</div><div style="left:932px;top:630px;width:38px;height:25px;background:#f0f0f0;color:#cc0000;line-height:25px;padding-top:1px;text-align:center">赢</div><div style="left:971px;top:630px;width:57px;height:25px;background:#f0f0f0;color:#008000;line-height:25px;padding-top:1px;text-align:center">走</div><div style="left:2px;top:656px;width:80px;height:25px;background:#006633;color:#fff;-webkit-text-stroke:0.35px #fff;line-height:25px;padding-top:1px;text-align:center">西甲</div><div style="left:83px;top:656px;width:75px;height:25px;background:#fff;color:#111;line-height:25px;padding-top:1px;text-align:center">24-08-20</div><div style="left:159px;top:656px;width:127px;height:25px;background:#fff;color:#111;line-height:25px;padding-top:1px;text-align:center">比利亚雷亚尔</div><div style="left:287px;top:656px;width:89px;height:25px;background:#fff;color:#111;line-height:25px;padding-top:1px;text-align:center"><span style="color:#cc0000">2-2</span>(2-2)</div><div style="left:377px;top:656px;width:37px;height:25px;background:#fff;color:#111;line-height:25px;padding-top:1px;text-align:center">2-3</div><div style="left:415px;top:656px;width:93px;height:25px;background:#fff;color:#111;line-height:25px;padding-top:1px;text-align:center"><span style="color:#0b700b">马德里竞技</span></div><div style="left:509px;top:656px;width:48px;height:25px;background:#fffaf6;color:#111;line-height:25px;padding-top:1px;text-align:center">1.03</div><div style="left:558px;top:656px;width:83px;height:25px;background:#fffaf6;color:#111;line-height:25px;padding-top:1px;text-align:center">受平/半</div><div style="left:642px;top:656px;width:51px;height:25px;background:#fffaf6;color:#111;line-height:25px;padding-top:1px;text-align:center">0.86</div><div style="left:694px;top:656px;width:60px;height:25px;background:#f0f7fb;color:#111;line-height:25px;padding-top:1px;text-align:center">3.43</div><div style="left:755px;top:656px;width:60px;height:25px;background:#f0f7fb;color:#111;line-height:25px;padding-top:1px;text-align:center">3.57</div><div style="left:816px;top:656px;width:77px;height:25px;background:#f0f7fb;color:#111;line-height:25px;padding-top:1px;text-align:center">2.07</div><div style="left:894px;top:656px;width:37px;height:25px;background:#fff;color:#008000;line-height:25px;padding-top:1px;text-align:center">平</div><div style="left:932px;top:656px;width:38px;height:25px;background:#fff;color:#0000cc;line-height:25px;padding-top:1px;text-align:center">输</div><div style="left:971px;top:656px;width:57px;height:25px;background:#fff;color:#cc0000;line-height:25px;padding-top:1px;text-align:center">大</div><div style="left:2px;top:682px;width:80px;height:25px;background:#00a0a0;color:#fff;line-height:25px;padding-top:1px;text-align:center">球会友谊</div><div style="left:83px;top:682px;width:75px;height:25px;background:#f0f0f0;color:#111;line-height:25px;padding-top:1px;text-align:center">24-08-11</div><div style="left:159px;top:682px;width:127px;height:25px;background:#f0f0f0;color:#111;line-height:25px;padding-top:1px;text-align:center"><span style="color:#0b700b">马德里竞技(中)</span></div><div style="left:287px;top:682px;width:89px;height:25px;background:#f0f0f0;color:#111;line-height:25px;padding-top:1px;text-align:center"><span style="color:#cc0000">2-0</span>(0-0)</div><div style="left:377px;top:682px;width:37px;height:25px;background:#f0f0f0;color:#111;line-height:25px;padding-top:1px;text-align:center">3-4</div><div style="left:415px;top:682px;width:93px;height:25px;background:#f0f0f0;color:#111;line-height:25px;padding-top:1px;text-align:center">尤文图斯</div><div style="left:509px;top:682px;width:48px;height:25px;background:#fffaf6;color:#111;line-height:25px;padding-top:1px;text-align:center">0.86</div><div style="left:558px;top:682px;width:83px;height:25px;background:#fffaf6;color:#111;line-height:25px;padding-top:1px;text-align:center">平/半</div><div style="left:642px;top:682px;width:51px;height:25px;background:#fffaf6;color:#111;line-height:25px;padding-top:1px;text-align:center">0.96</div><div style="left:694px;top:682px;width:60px;height:25px;background:#f0f7fb;color:#111;line-height:25px;padding-top:1px;text-align:center">2.11</div><div style="left:755px;top:682px;width:60px;height:25px;background:#f0f7fb;color:#111;line-height:25px;padding-top:1px;text-align:center">3.42</div><div style="left:816px;top:682px;width:77px;height:25px;background:#f0f7fb;color:#111;line-height:25px;padding-top:1px;text-align:center">3.07</div><div style="left:894px;top:682px;width:37px;height:25px;background:#f0f0f0;color:#ff0000;line-height:25px;padding-top:1px;text-align:center">胜</div><div style="left:932px;top:682px;width:38px;height:25px;background:#f0f0f0;color:#cc0000;line-height:25px;padding-top:1px;text-align:center">赢</div><div style="left:971px;top:682px;width:57px;height:25px;background:#f0f0f0;color:#0000cc;line-height:25px;padding-top:1px;text-align:center">小</div><div style="left:2px;top:473px;width:80px;height:1px;background:#90d0a8"></div><div style="left:2px;top:499px;width:80px;height:1px;background:#90d0a8"></div><div style="left:2px;top:525px;width:80px;height:1px;background:#c0cca9"></div><div style="left:2px;top:551px;width:80px;height:1px;background:#c0cca9"></div><div style="left:2px;top:577px;width:80px;height:1px;background:#90d0a8"></div><div style="left:2px;top:603px;width:80px;height:1px;background:#90d0a8"></div><div style="left:2px;top:629px;width:80px;height:1px;background:#90d0a8"></div><div style="left:2px;top:655px;width:80px;height:1px;background:#90d0a8"></div><div style="left:2px;top:681px;width:80px;height:1px;background:#88d4c0"></div><div style="left:2px;top:708px;width:1026px;height:25px;background:#fff;line-height:25px;text-align:center;color:#333;letter-spacing:0.25px">近<span style="color:#cc0000">10</span>场,胜6平4负0, 胜率:<span style="color:#cc0000">60%</span> 让胜率:<span style="color:#cc0000">60%</span> 大率:<span style="color:#cc0000">20%</span> 单率:<span style="color:#cc0000">50%</span></div><div class="sel" style="left:541px;top:409px;width:60px;height:19px;"><span style="left:5px;top:0;line-height:17px;font-size:13px">Crow*</span><svg style="left:44px;top:5px" width="12" height="7" viewBox="0 0 12 7"><path d="M1 1 L6 5.8 L11 1" fill="none" stroke="#000" stroke-width="2"/></svg></div><div class="sel" style="left:610px;top:409px;width:50px;height:19px;"><span style="left:5px;top:0;line-height:17px;font-size:13px">终指</span><svg style="left:34px;top:5px" width="12" height="7" viewBox="0 0 12 7"><path d="M1 1 L6 5.8 L11 1" fill="none" stroke="#000" stroke-width="2"/></svg></div><div class="sel" style="left:730px;top:409px;width:69px;height:19px;"><span style="left:5px;top:0;line-height:17px;font-size:13px">平均值</span><svg style="left:53px;top:5px" width="12" height="7" viewBox="0 0 12 7"><path d="M1 1 L6 5.8 L11 1" fill="none" stroke="#000" stroke-width="2"/></svg></div><div class="sel" style="left:806px;top:409px;width:51px;height:19px;"><span style="left:5px;top:0;line-height:17px;font-size:13px">终指</span><svg style="left:35px;top:5px" width="12" height="7" viewBox="0 0 12 7"><path d="M1 1 L6 5.8 L11 1" fill="none" stroke="#000" stroke-width="2"/></svg></div><div class="sel" style="left:935px;top:409px;width:51px;height:19px;"><span style="left:5px;top:0;line-height:17px;font-size:13px">全场</span><svg style="left:35px;top:5px" width="12" height="7" viewBox="0 0 12 7"><path d="M1 1 L6 5.8 L11 1" fill="none" stroke="#000" stroke-width="2"/></svg></div>
</body></html>
